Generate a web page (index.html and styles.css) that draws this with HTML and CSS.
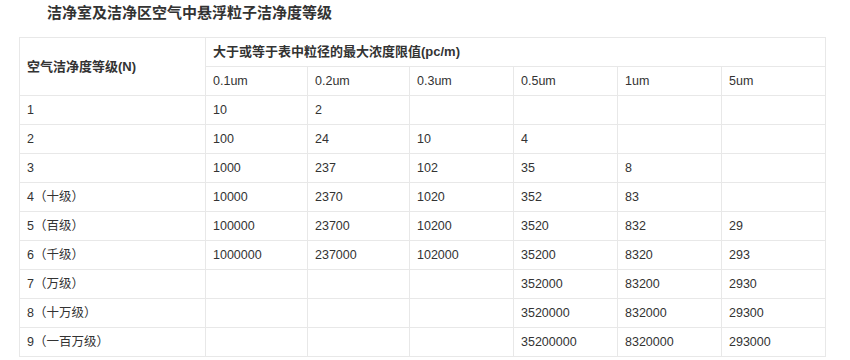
FILE: index.html
```html
<!DOCTYPE html>
<html lang="zh-CN">
<head>
    <meta charset="UTF-8">
    <meta name="viewport" content="width=device-width, initial-scale=1.0">
    <title>洁净度等级</title>
    <link rel="stylesheet" href="styles.css">
</head>
<body>
    <h3 class="title">洁净室及洁净区空气中悬浮粒子洁净度等级</h3>
    <table class="grade-table">
        <colgroup>
            <col class="col-grade">
            <col class="col-narrow">
            <col class="col-narrow">
            <col class="col-wide">
            <col class="col-wide">
            <col class="col-wide">
            <col class="col-wide">
        </colgroup>
        <tr>
            <th rowspan="2">空气洁净度等级(N)</th>
            <th colspan="6">大于或等于表中粒径的最大浓度限值(pc/m)</th>
        </tr>
        <tr>
            <td>0.1um</td><td>0.2um</td><td>0.3um</td><td>0.5um</td><td>1um</td><td>5um</td>
        </tr>
        <tr><td>1</td><td>10</td><td>2</td><td></td><td></td><td></td><td></td></tr>
        <tr><td>2</td><td>100</td><td>24</td><td>10</td><td>4</td><td></td><td></td></tr>
        <tr><td>3</td><td>1000</td><td>237</td><td>102</td><td>35</td><td>8</td><td></td></tr>
        <tr><td>4（十级）</td><td>10000</td><td>2370</td><td>1020</td><td>352</td><td>83</td><td></td></tr>
        <tr><td>5（百级）</td><td>100000</td><td>23700</td><td>10200</td><td>3520</td><td>832</td><td>29</td></tr>
        <tr><td>6（千级）</td><td>1000000</td><td>237000</td><td>102000</td><td>35200</td><td>8320</td><td>293</td></tr>
        <tr><td>7（万级）</td><td></td><td></td><td></td><td>352000</td><td>83200</td><td>2930</td></tr>
        <tr><td>8（十万级）</td><td></td><td></td><td></td><td>3520000</td><td>832000</td><td>29300</td></tr>
        <tr><td>9（一百万级）</td><td></td><td></td><td></td><td>35200000</td><td>8320000</td><td>293000</td></tr>
    </table>
</body>
</html>
```

FILE: styles.css
```css
body {
    margin: 0;
    padding: 0;
    background-color: #fff;
    color: #333;
    font-family: "Liberation Sans", "Noto Sans CJK SC", sans-serif;
}
.title {
    margin: 0;
    padding-left: 47px;
    font-size: 15px;
    line-height: 25px;
    font-weight: bold;
    color: #333;
}
.grade-table {
    margin: 12px 0 0 19px;
    width: 807px;
    table-layout: fixed;
    border-collapse: collapse;
    font-size: 12.5px;
}
.col-grade {
    width: 186px;
}
.col-narrow {
    width: 102px;
}
.col-wide {
    width: 104px;
}
.grade-table th, .grade-table td {
    border: 1px solid #e8e8e8;
    height: 28px;
    padding: 0 7px;
    line-height: 28px;
    text-align: left;
    white-space: nowrap;
}
.grade-table th {
    font-size: 13px;
    font-weight: bold;
}
```
